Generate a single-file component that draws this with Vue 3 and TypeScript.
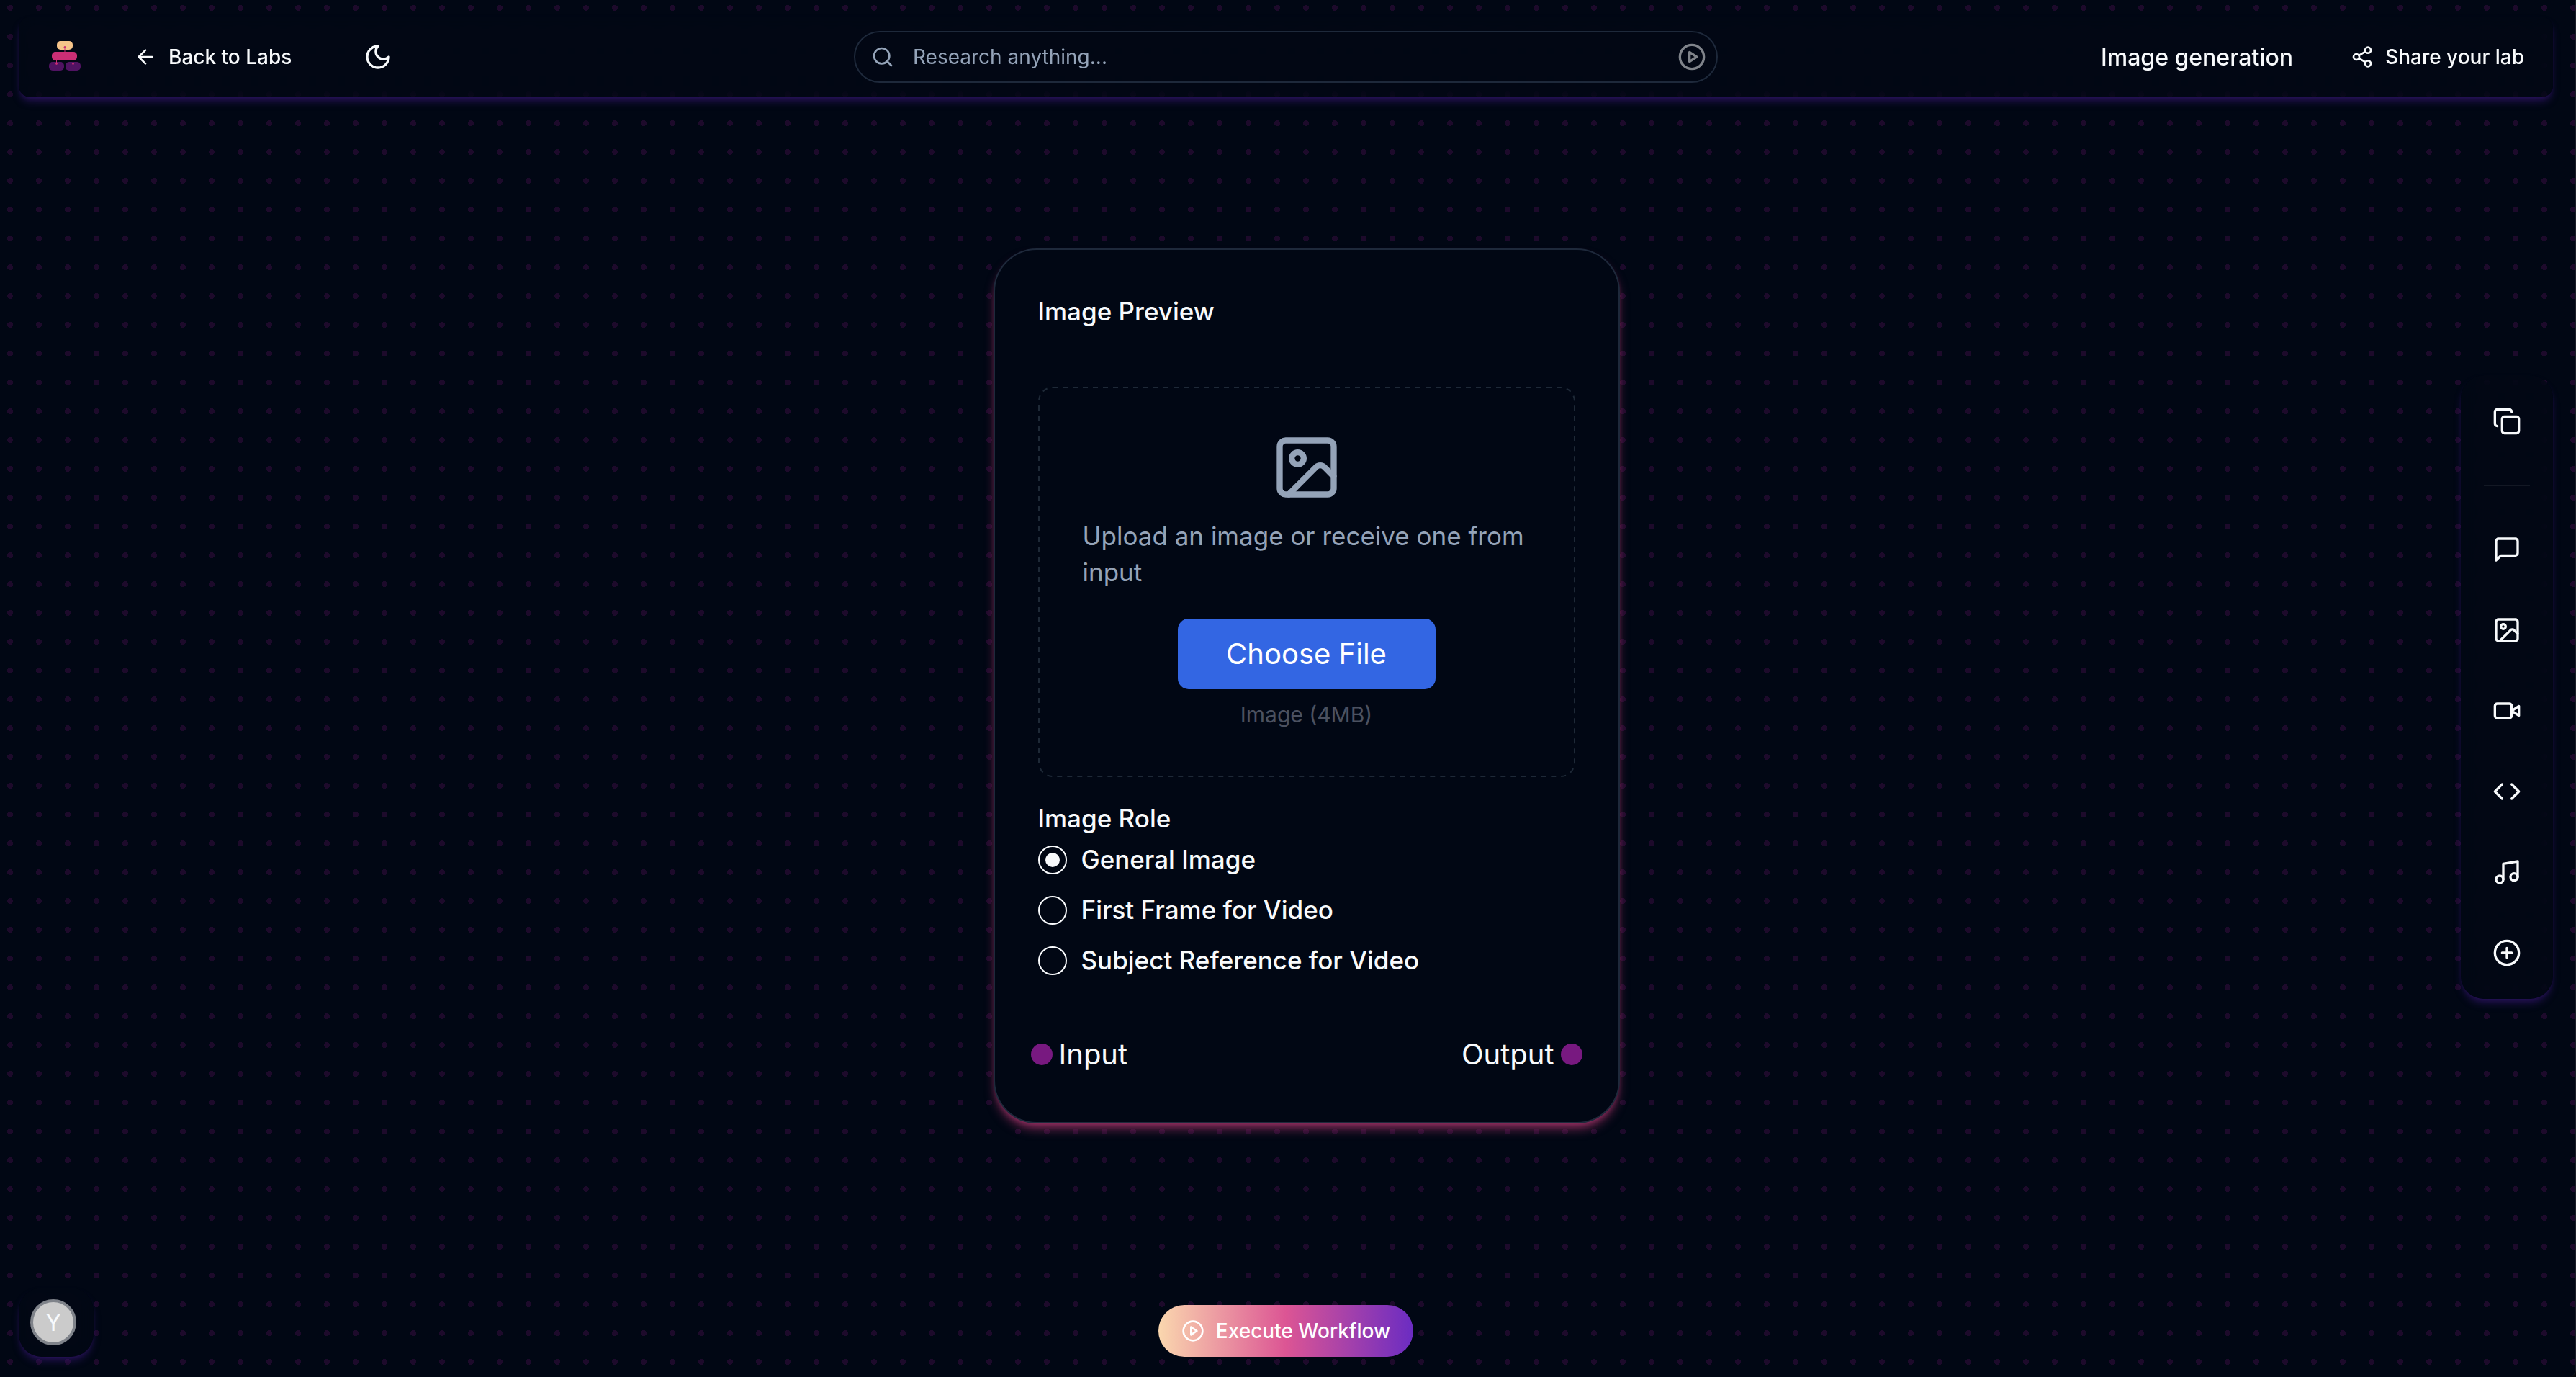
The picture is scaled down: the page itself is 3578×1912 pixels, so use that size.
<script setup lang="ts">
import { ref } from 'vue'

interface Tool {
  name: string
  paths: string[]
}

const query = ref('')
const role = ref('general')
const fileInput = ref<HTMLInputElement | null>(null)

const roles = [
  { id: 'general', label: 'General Image' },
  { id: 'first-frame', label: 'First Frame for Video' },
  { id: 'subject', label: 'Subject Reference for Video' },
]

const imagePaths = [
  'M5 3h14a2 2 0 0 1 2 2v14a2 2 0 0 1-2 2H5a2 2 0 0 1-2-2V5a2 2 0 0 1 2-2z',
  'M7 9a2 2 0 1 0 4 0a2 2 0 1 0-4 0',
  'm21 15-3.086-3.086a2 2 0 0 0-2.828 0L6 21',
]

const playPaths = ['M2 12a10 10 0 1 0 20 0a10 10 0 1 0-20 0', 'm10 8 6 4-6 4z']

const tools: Tool[] = [
  { name: 'Text', paths: ['M21 15a2 2 0 0 1-2 2H7l-4 4V5a2 2 0 0 1 2-2h14a2 2 0 0 1 2 2z'] },
  { name: 'Image', paths: imagePaths },
  {
    name: 'Video',
    paths: [
      'm22 8-6 4 6 4V8Z',
      'M4 6h10a2 2 0 0 1 2 2v8a2 2 0 0 1-2 2H4a2 2 0 0 1-2-2V8a2 2 0 0 1 2-2z',
    ],
  },
  { name: 'Code', paths: ['m16 18 6-6-6-6', 'm8 6-6 6 6 6'] },
  {
    name: 'Audio',
    paths: ['M9 18V5l12-2v13', 'M3 18a3 3 0 1 0 6 0a3 3 0 1 0-6 0', 'M15 16a3 3 0 1 0 6 0a3 3 0 1 0-6 0'],
  },
  { name: 'Add', paths: ['M2 12a10 10 0 1 0 20 0a10 10 0 1 0-20 0', 'M8 12h8', 'M12 8v8'] },
]
</script>

<template>
  <div class="page">
    <main class="canvas">
      <article class="node">
        <h2 class="node-title">Image Preview</h2>

        <section class="dropzone">
          <svg class="outline" aria-hidden="true"><rect x="1" y="1" rx="19" /></svg>
          <svg class="icon icon-xl" viewBox="0 0 24 24">
            <path v-for="d in imagePaths" :key="d" :d="d" />
          </svg>
          <p class="hint">Upload an image or receive one from input</p>
          <button class="choose" type="button" @click="fileInput?.click()">Choose File</button>
          <input ref="fileInput" type="file" accept="image/*" hidden aria-label="Image file" />
          <p class="limit">Image (4MB)</p>
        </section>

        <fieldset class="roles">
          <legend>Image Role</legend>
          <label v-for="r in roles" :key="r.id" class="role">
            <input v-model="role" type="radio" name="role" :value="r.id" />
            <span>{{ r.label }}</span>
          </label>
        </fieldset>

        <footer class="ports">
          <span class="port"><i class="handle"></i>Input</span>
          <span class="port">Output<i class="handle"></i></span>
        </footer>
      </article>
    </main>

    <header class="bar panel">
      <div class="bar-left">
        <svg class="logo" viewBox="0 0 48 48" aria-label="Labs">
          <rect x="13" y="2" width="22" height="12" rx="5" fill="#f6c48a" />
          <rect x="6" y="17" width="35" height="12" rx="5" fill="#cb2e75" />
          <rect x="2" y="31" width="21" height="12" rx="5" fill="#501362" />
          <rect x="25" y="31" width="21" height="12" rx="5" fill="#501362" />
          <g stroke="#cb2e75" fill="#cb2e75">
            <path d="M24 10v7M12.500 29v4M35.500 29v4" />
            <circle cx="24" cy="10.500" r="1" />
            <circle cx="12.500" cy="33.500" r="1" />
            <circle cx="35.500" cy="33.500" r="1" />
          </g>
        </svg>
        <a class="link" href="#labs">
          <svg class="icon icon-sm" viewBox="0 0 24 24"><path d="m12 19-7-7 7-7" /><path d="M19 12H5" /></svg>
          Back to Labs
        </a>
        <button class="square" type="button" aria-label="Toggle theme">
          <svg class="icon" viewBox="0 0 24 24"><path d="M12 3a6 6 0 0 0 9 9 9 9 0 1 1-9-9Z" /></svg>
        </button>
      </div>

      <form class="search" @submit.prevent>
        <svg class="icon icon-sm" viewBox="0 0 24 24"><circle cx="11" cy="11" r="8" /><path d="m21 21-4.300-4.300" /></svg>
        <input v-model="query" type="text" placeholder="Research anything..." aria-label="Research" />
        <button type="submit" aria-label="Run research">
          <svg class="icon" viewBox="0 0 24 24"><path v-for="d in playPaths" :key="d" :d="d" /></svg>
        </button>
      </form>

      <div class="bar-right">
        <h1>Image generation</h1>
        <button class="link" type="button">
          <svg class="icon icon-sm" viewBox="0 0 24 24">
            <circle cx="18" cy="5" r="3" /><circle cx="6" cy="12" r="3" /><circle cx="18" cy="19" r="3" />
            <path d="m8.590 13.510 6.830 3.980M15.410 6.510l-6.820 3.980" />
          </svg>
          Share your lab
        </button>
      </div>
    </header>

    <div class="side">
      <nav class="toolbox panel" aria-label="Nodes">
        <button class="square" type="button" aria-label="Copy">
          <svg class="icon" viewBox="0 0 24 24">
            <rect x="8" y="8" width="14" height="14" rx="2" />
            <path d="M4 16c-1.100 0-2-.9-2-2V4c0-1.100.9-2 2-2h10c1.100 0 2 .9 2 2" />
          </svg>
        </button>
        <hr />
        <button v-for="t in tools" :key="t.name" class="square" type="button" :aria-label="t.name">
          <svg class="icon" viewBox="0 0 24 24"><path v-for="d in t.paths" :key="d" :d="d" /></svg>
        </button>
      </nav>
    </div>

    <div class="dock">
      <div class="user panel"><button class="avatar" type="button">Y</button></div>
      <button class="execute" type="button">
        <svg class="icon icon-sm" viewBox="0 0 24 24"><path v-for="d in playPaths" :key="d" :d="d" /></svg>
        Execute Workflow
      </button>
    </div>
  </div>
</template>

<style>
body {
  background: #08090c;
}
</style>

<style scoped>
* {
  box-sizing: border-box;
}

.page {
  position: relative;
  display: grid;
  grid-template-rows: auto 1fr auto;
  min-height: 100vh;
  padding: 23px 31px 28px 26px;
  border-right: 1px solid #1b1e28;
  border-radius: 0 0 10px 0;
  background: radial-gradient(circle at 14px 11px, #1d0a2b 4px, transparent 4px) 0 0 / 40px 40px #010714;
  color: #f8fafc;
  font-family: Inter, sans-serif;
  font-size: 28px;
}

h1,
h2,
p {
  margin: 0;
  font-weight: 500;
}

button,
input {
  margin: 0;
  padding: 0;
  border: 0;
  background: none;
  color: inherit;
  font: inherit;
}

.icon {
  display: block;
  flex: none;
  width: 40px;
  height: 40px;
  fill: none;
  stroke: currentColor;
  stroke-width: 2;
  stroke-linecap: round;
  stroke-linejoin: round;
}

.icon-sm {
  width: 32px;
  height: 32px;
}

.icon-xl {
  width: 100px;
  height: 100px;
}

.panel {
  position: relative;
  background: rgba(1, 7, 20, 0.5);
  box-shadow: 0 8px 12px -2px rgba(76, 29, 149, 0.4), 0 4px 8px -4px rgba(76, 29, 149, 0.4);
  backdrop-filter: blur(12px);
}

/* Header */
.bar {
  display: grid;
  grid-template-columns: 1fr minmax(0, 1200px) 1fr;
  align-items: center;
  height: 112px;
  padding: 0 8px;
  border-radius: 16px;
}

.bar-left {
  display: flex;
  align-items: center;
  gap: 40px;
  padding-left: 32px;
}

.logo {
  width: 48px;
  height: 48px;
}

.link {
  display: flex;
  align-items: center;
  gap: 16px;
  height: 72px;
  padding: 0 32px;
  color: inherit;
  font-weight: 500;
  text-decoration: none;
  white-space: nowrap;
}

.square {
  display: grid;
  place-items: center;
  width: 96px;
  height: 96px;
}

.search {
  display: flex;
  align-items: center;
  height: 72px;
  padding: 0 14px 0 22px;
  border: 2px solid #1e293b;
  border-radius: 36px;
  color: #94a3b8;
}

.search input {
  flex: 1;
  min-width: 0;
  height: 40px;
  padding: 0 26px;
  outline: 0;
}

.search input::placeholder {
  color: #94a3b8;
  opacity: 1;
}

.search button {
  color: #7f838a;
}

.bar-right {
  display: flex;
  align-items: center;
  justify-content: flex-end;
  gap: 48px;
}

.bar-right h1 {
  font-size: 32px;
}

/* Canvas and node */
.canvas {
  position: absolute;
  inset: 0;
  display: grid;
  place-items: center;
  padding: 0 0 8px 52px;
}

.node {
  width: 870px;
  padding: 60px 60px 64px;
  border: 2px solid #1e293b;
  border-radius: 60px;
  background: #010714;
  box-shadow: 0 10px 15px -3px rgba(203, 62, 125, 0.6), 0 5px 10px -5px rgba(203, 62, 125, 0.6);
  font-size: 35px;
  line-height: 50px;
}

.node-title {
  font-size: 35px;
}

.dropzone {
  position: relative;
  display: flex;
  flex-direction: column;
  align-items: center;
  margin-top: 80px;
  padding: 62px;
  color: #94a3b8;
}

.outline {
  position: absolute;
  inset: 0;
  width: 100%;
  height: 100%;
}

.outline rect {
  width: calc(100% - 2px);
  height: calc(100% - 2px);
  fill: none;
  stroke: #1e2937;
  stroke-width: 2;
  stroke-dasharray: 7 7;
}

.hint {
  margin: 20px 0 40px;
  font-weight: 400;
}

.choose {
  position: relative;
  width: 358px;
  height: 98px;
  border-radius: 15px;
  background: #3366e3;
  color: #fff;
  font-size: 40px;
}

.limit {
  margin-top: 10px;
  color: #4b5160;
  font-size: 30px;
  font-weight: 400;
}

.roles {
  display: flex;
  flex-direction: column;
  gap: 30px;
  margin: 40px 0 0;
  padding: 0;
  border: 0;
  font-weight: 500;
  line-height: 35px;
}

.roles legend {
  margin-bottom: 20px;
  padding: 0;
}

.role {
  display: flex;
  align-items: center;
  gap: 20px;
  height: 40px;
}

.role input {
  appearance: none;
  display: grid;
  place-items: center;
  width: 40px;
  height: 40px;
  border: 2px solid #f8fafc;
  border-radius: 50%;
}

.role input:checked::before {
  content: '';
  width: 20px;
  height: 20px;
  border-radius: 50%;
  background: #f8fafc;
}

.ports {
  display: flex;
  justify-content: space-between;
  margin: 80px -10px 0;
  font-size: 40px;
  line-height: 60px;
}

.port {
  display: flex;
  align-items: center;
  gap: 9px;
}

.handle {
  width: 30px;
  height: 30px;
  border-radius: 50%;
  background: #781980;
}

/* Toolbox */
.side {
  display: flex;
  align-items: center;
  justify-content: flex-end;
  padding-bottom: 16px;
}

.toolbox {
  display: flex;
  flex-direction: column;
  align-items: center;
  gap: 16px;
  padding: 16px;
  border-radius: 32px;
}

.toolbox hr {
  width: 64px;
  height: 2px;
  margin: 24px 0;
  border: 0;
  background: #131824;
}

/* Dock */
.dock {
  display: grid;
  grid-template-columns: 1fr auto 1fr;
  align-items: end;
}

.user {
  justify-self: start;
  width: 104px;
  padding: 16px;
  border-radius: 32px;
}

.avatar {
  display: block;
  width: 64px;
  height: 64px;
  border: 4px solid #7f838a;
  border-radius: 50%;
  background: #cbcbcb;
  font-size: 32px;
}

.execute {
  position: relative;
  display: flex;
  align-items: center;
  gap: 16px;
  height: 72px;
  padding: 0 32px;
  border-radius: 36px;
  background: linear-gradient(90deg, #fad7ae, #dc5594 50%, #6b2cc2);
  color: #fff;
  font-weight: 500;
}
</style>
